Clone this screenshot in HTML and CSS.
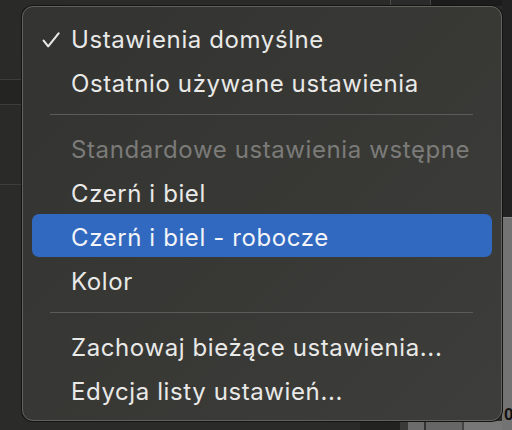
FILE: index.html
```html
<!DOCTYPE html>
<html lang="pl">
<head>
<meta charset="utf-8">
<title>Menu ustawień</title>
<link rel="stylesheet" href="styles.css">
</head>
<body>
<div class="stage">
  <div class="backdrop">
    <div class="left-strip">
      <div class="ls ls-a"></div>
      <div class="ls ls-b"></div>
      <div class="ls ls-c"></div>
      <div class="ls ls-d"></div>
    </div>
    <div class="middle">
      <div class="top-strip">
        <div class="ts ts-a"></div>
        <div class="ts ts-b"></div>
        <div class="ts ts-c"></div>
      </div>
      <div class="mid-fill"></div>
      <div class="bottom-strip">
        <div class="bs bs-a"></div>
        <div class="bs bs-b"></div>
        <div class="bs bs-c"></div>
        <div class="bs bs-d"></div>
        <div class="bs bs-e"></div>
        <div class="bs bs-f"></div>
      </div>
    </div>
    <div class="right-strip">
      <div class="rs rs-top"></div>
      <div class="rs rs-bottom"><span class="zero">0</span></div>
    </div>
  </div>

  <div class="menu" role="menu">
    <div class="item checked" role="menuitemcheckbox" aria-checked="true">
      <span class="mark"><svg width="18" height="16" viewBox="0 0 18 16"><polyline points="1.6,8.6 6.2,14.3 16.6,1.4" fill="none" stroke="#e8e8e6" stroke-width="2.1" stroke-linecap="round" stroke-linejoin="round"/></svg></span>
      <span class="label">Ustawienia domyślne</span>
    </div>
    <div class="item" role="menuitem"><span class="mark"></span><span class="label">Ostatnio używane ustawienia</span></div>
    <div class="sep"></div>
    <div class="item disabled" role="menuitem"><span class="mark"></span><span class="label">Standardowe ustawienia wstępne</span></div>
    <div class="item" role="menuitem"><span class="mark"></span><span class="label">Czerń i biel</span></div>
    <div class="item active" role="menuitem"><span class="mark"></span><span class="label">Czerń i biel - robocze</span></div>
    <div class="item" role="menuitem"><span class="mark"></span><span class="label">Kolor</span></div>
    <div class="sep"></div>
    <div class="item" role="menuitem"><span class="mark"></span><span class="label">Zachowaj bieżące ustawienia...</span></div>
    <div class="item" role="menuitem"><span class="mark"></span><span class="label">Edycja listy ustawień...</span></div>
  </div>
</div>
</body>
</html>
```

FILE: styles.css
```css
html, body {
  margin: 0;
  padding: 0;
  background: #1f1f1e;
}

.stage {
  position: relative;
  width: 512px;
  height: 430px;
  overflow: hidden;
  font-family: "Inter", "Noto Sans", sans-serif;
}

/* ---------- backdrop ---------- */
.backdrop {
  display: grid;
  grid-template-columns: 22px 1fr 10px;
  height: 430px;
}

.left-strip {
  display: flex;
  flex-direction: column;
}
.ls { background: #2a2a28; }
.ls-a { height: 79px; border-bottom: 1px solid #3d3d3b; }
.ls-b { height: 24px; background: #242422; border-bottom: 1px solid #3d3d3b; }
.ls-c { height: 79px; border-bottom: 1px solid #3d3d3b; }
.ls-d { flex: 1; background: #2b2b29; }

.middle {
  display: flex;
  flex-direction: column;
}
.top-strip {
  height: 6px;
  display: flex;
}
.ts-a { width: 368px; background: #2a2a28; border-right: 1px solid #4c4c4a; }
.ts-b { width: 39px; background: #2b2b2b; border-right: 1px solid #444; }
.ts-c { flex: 1; background: #1c1c1c; }

.mid-fill { flex: 1; background: #2a2a28; }

.bottom-strip {
  height: 9px;
  display: flex;
}
.bs-a { width: 338px; background: #2a2a28; }
.bs-b { width: 40px; background: #222220; }
.bs-c { width: 8px; background: #3a3a38; }
.bs-d { width: 16px; background: #6c6c6c; border-right: 2px solid #333; }
.bs-e { width: 36px; background: #666; border-right: 2px solid #444; }
.bs-f { flex: 1; background: #777; }

.right-strip {
  display: flex;
  flex-direction: column;
}
.rs-top { height: 217px; background: #222; }
.rs-bottom {
  flex: 1;
  background: #737373;
  border-top: 1px solid #888;
  display: flex;
  align-items: flex-end;
  padding-bottom: 8px;
}
.zero {
  font-family: "Liberation Sans", sans-serif;
  font-weight: bold;
  font-size: 17px;
  line-height: 14px;
  color: #111;
  margin-left: 2px;
}

/* ---------- menu ---------- */
.menu {
  position: absolute;
  left: 22px;
  top: 6px;
  width: 480px;
  height: 415px;
  box-sizing: border-box;
  padding: 9px 0 8px;
  border: 1px solid #62625f;
  border-radius: 11px;
  box-shadow: 0 0 0 1px #141413;
  background: linear-gradient(135deg, #333331 0%, #383835 55%, #3d3e3b 100%);
}

.item {
  display: grid;
  grid-template-columns: 29px 1fr;
  align-items: center;
  height: 44px;
  margin: 0 9px;
  padding-left: 10px;
  border-radius: 7px;
  color: #e9e9e7;
  font-size: 24px;
  letter-spacing: 0.6px;
  line-height: 44px;
  white-space: nowrap;
}

.label { margin-top: 2px; }

.mark {
  display: flex;
  align-items: center;
  height: 44px;
}
.mark svg { display: block; margin-top: 1px; }

.item.disabled { color: #7b7b79; }

.item.active {
  background: #3168c0;
  color: #f2f4f8;
  height: 43px;
  margin-bottom: 1px;
}

.sep {
  height: 1px;
  margin: 10px 28px 11px 27px;
  background: #5b5b59;
}
```
